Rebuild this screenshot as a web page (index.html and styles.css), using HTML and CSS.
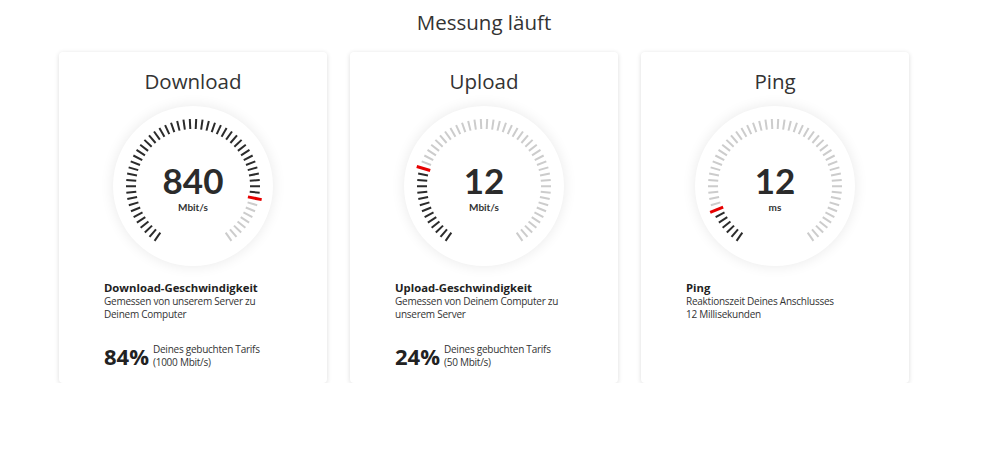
FILE: index.html
```html
<!DOCTYPE html>
<html>
  <head>
    <title>Messung läuft</title>
    <link rel="stylesheet" href="styles.css">
  </head>
  <body>
    <main class="page">
      <h1 class="page-title">Messung läuft</h1>
      <div class="cards">
        <section class="card">
          <h2 class="card-title">Download</h2>
          <div class="gauge">
            <svg class="ticks" width="160" height="160" viewBox="0 0 160 160" data-value="0.84"></svg>
            <div class="reading">
              <span class="value">840</span>
              <span class="unit">Mbit/s</span>
            </div>
          </div>
          <div class="info">
            <h3 class="info-title">Download-Geschwindigkeit</h3>
            <p class="info-text">Gemessen von unserem Server zu<br />Deinem Computer</p>
            <div class="share">
              <span class="share-value">84%</span>
              <span class="share-text">Deines gebuchten Tarifs<br />(1000 Mbit/s)</span>
            </div>
          </div>
        </section>

        <section class="card">
          <h2 class="card-title">Upload</h2>
          <div class="gauge">
            <svg class="ticks" width="160" height="160" viewBox="0 0 160 160" data-value="0.24"></svg>
            <div class="reading">
              <span class="value">12</span>
              <span class="unit">Mbit/s</span>
            </div>
          </div>
          <div class="info">
            <h3 class="info-title">Upload-Geschwindigkeit</h3>
            <p class="info-text">Gemessen von Deinem Computer zu<br />unserem Server</p>
            <div class="share">
              <span class="share-value">24%</span>
              <span class="share-text">Deines gebuchten Tarifs<br />(50 Mbit/s)</span>
            </div>
          </div>
        </section>

        <section class="card">
          <h2 class="card-title">Ping</h2>
          <div class="gauge">
            <svg class="ticks" width="160" height="160" viewBox="0 0 160 160" data-value="0.12"></svg>
            <div class="reading">
              <span class="value">12</span>
              <span class="unit">ms</span>
            </div>
          </div>
          <div class="info">
            <h3 class="info-title">Ping</h3>
            <p class="info-text">Reaktionszeit Deines Anschlusses<br />12 Millisekunden</p>
          </div>
        </section>
      </div>
    </main>

    <script>
      const NS = "http://www.w3.org/2000/svg";
      const TICKS = 54;
      const START = -145;
      const SWEEP = 290;

      document.querySelectorAll(".ticks").forEach((svg) => {
        const value = parseFloat(svg.dataset.value);
        const active = Math.round(value * (TICKS - 1));

        for (let i = 0; i < TICKS; i++) {
          const angle = ((START + (SWEEP * i) / (TICKS - 1)) * Math.PI) / 180;
          const isRed = i === active;
          const r1 = isRed ? 56 : 57;
          const r2 = isRed ? 70 : 67;
          const line = document.createElementNS(NS, "line");
          line.setAttribute("x1", 80 + r1 * Math.sin(angle));
          line.setAttribute("y1", 80 - r1 * Math.cos(angle));
          line.setAttribute("x2", 80 + r2 * Math.sin(angle));
          line.setAttribute("y2", 80 - r2 * Math.cos(angle));
          line.setAttribute("class", isRed ? "tick red" : i < active ? "tick on" : "tick off");
          svg.appendChild(line);
        }
      });
    </script>
  </body>
</html>
```

FILE: styles.css
```css
body {
  margin: 0;
  background-color: #fff;
  color: #333;
  font-family: "Open Sans", "Liberation Sans", sans-serif;
}
.page {
  width: 850px;
  margin-left: 59px;
}
.page-title {
  margin: 0;
  padding-top: 7px;
  height: 52px;
  box-sizing: border-box;
  text-align: center;
  font-size: 20.5px;
  font-weight: 400;
  line-height: 30px;
  color: #333;
}
.cards {
  display: flex;
  gap: 23px;
}
.card {
  width: 268px;
  height: 331px;
  box-sizing: border-box;
  background-color: #fff;
  border-radius: 4px;
  box-shadow: 0 1px 5px rgba(0, 0, 0, 0.14);
  display: flex;
  flex-direction: column;
  align-items: center;
}
.card-title {
  margin: 14px 0 0;
  font-size: 20.5px;
  font-weight: 400;
  line-height: 30px;
  color: #333;
}
.gauge {
  margin-top: 10px;
  width: 160px;
  height: 160px;
  border-radius: 50%;
  background-color: #fff;
  box-shadow: 0 0 14px rgba(0, 0, 0, 0.09);
  display: grid;
}
.ticks,
.reading {
  grid-area: 1 / 1;
}
.tick {
  stroke-width: 2;
}
.tick.on {
  stroke: #2b2b2b;
}
.tick.off {
  stroke: #ccc;
}
.tick.red {
  stroke: #e60000;
  stroke-width: 3;
}
.reading {
  display: flex;
  flex-direction: column;
  align-items: center;
  justify-content: center;
  padding-top: 2px;
  font-family: Lato, "Open Sans", sans-serif;
}
.value {
  font-size: 35px;
  font-weight: 700;
  line-height: 36px;
  color: #2b2b2b;
}
.unit {
  font-size: 10px;
  font-weight: 700;
  line-height: 12px;
  margin-top: 3px;
  color: #333;
}
.info {
  align-self: stretch;
  padding: 15px 0 0 45px;
}
.info-title {
  margin: 0;
  font-size: 11.3px;
  font-weight: 700;
  line-height: 14px;
  color: #222;
}
.info-text {
  margin: 0;
  font-size: 10px;
  letter-spacing: -0.25px;
  line-height: 13px;
  color: #333;
}
.share {
  display: flex;
  align-items: center;
  gap: 4px;
  margin-top: 21px;
}
.share-value {
  font-size: 22px;
  font-weight: 700;
  line-height: 28px;
  color: #222;
}
.share-text {
  font-size: 10px;
  letter-spacing: -0.25px;
  line-height: 13px;
  color: #333;
}
```
